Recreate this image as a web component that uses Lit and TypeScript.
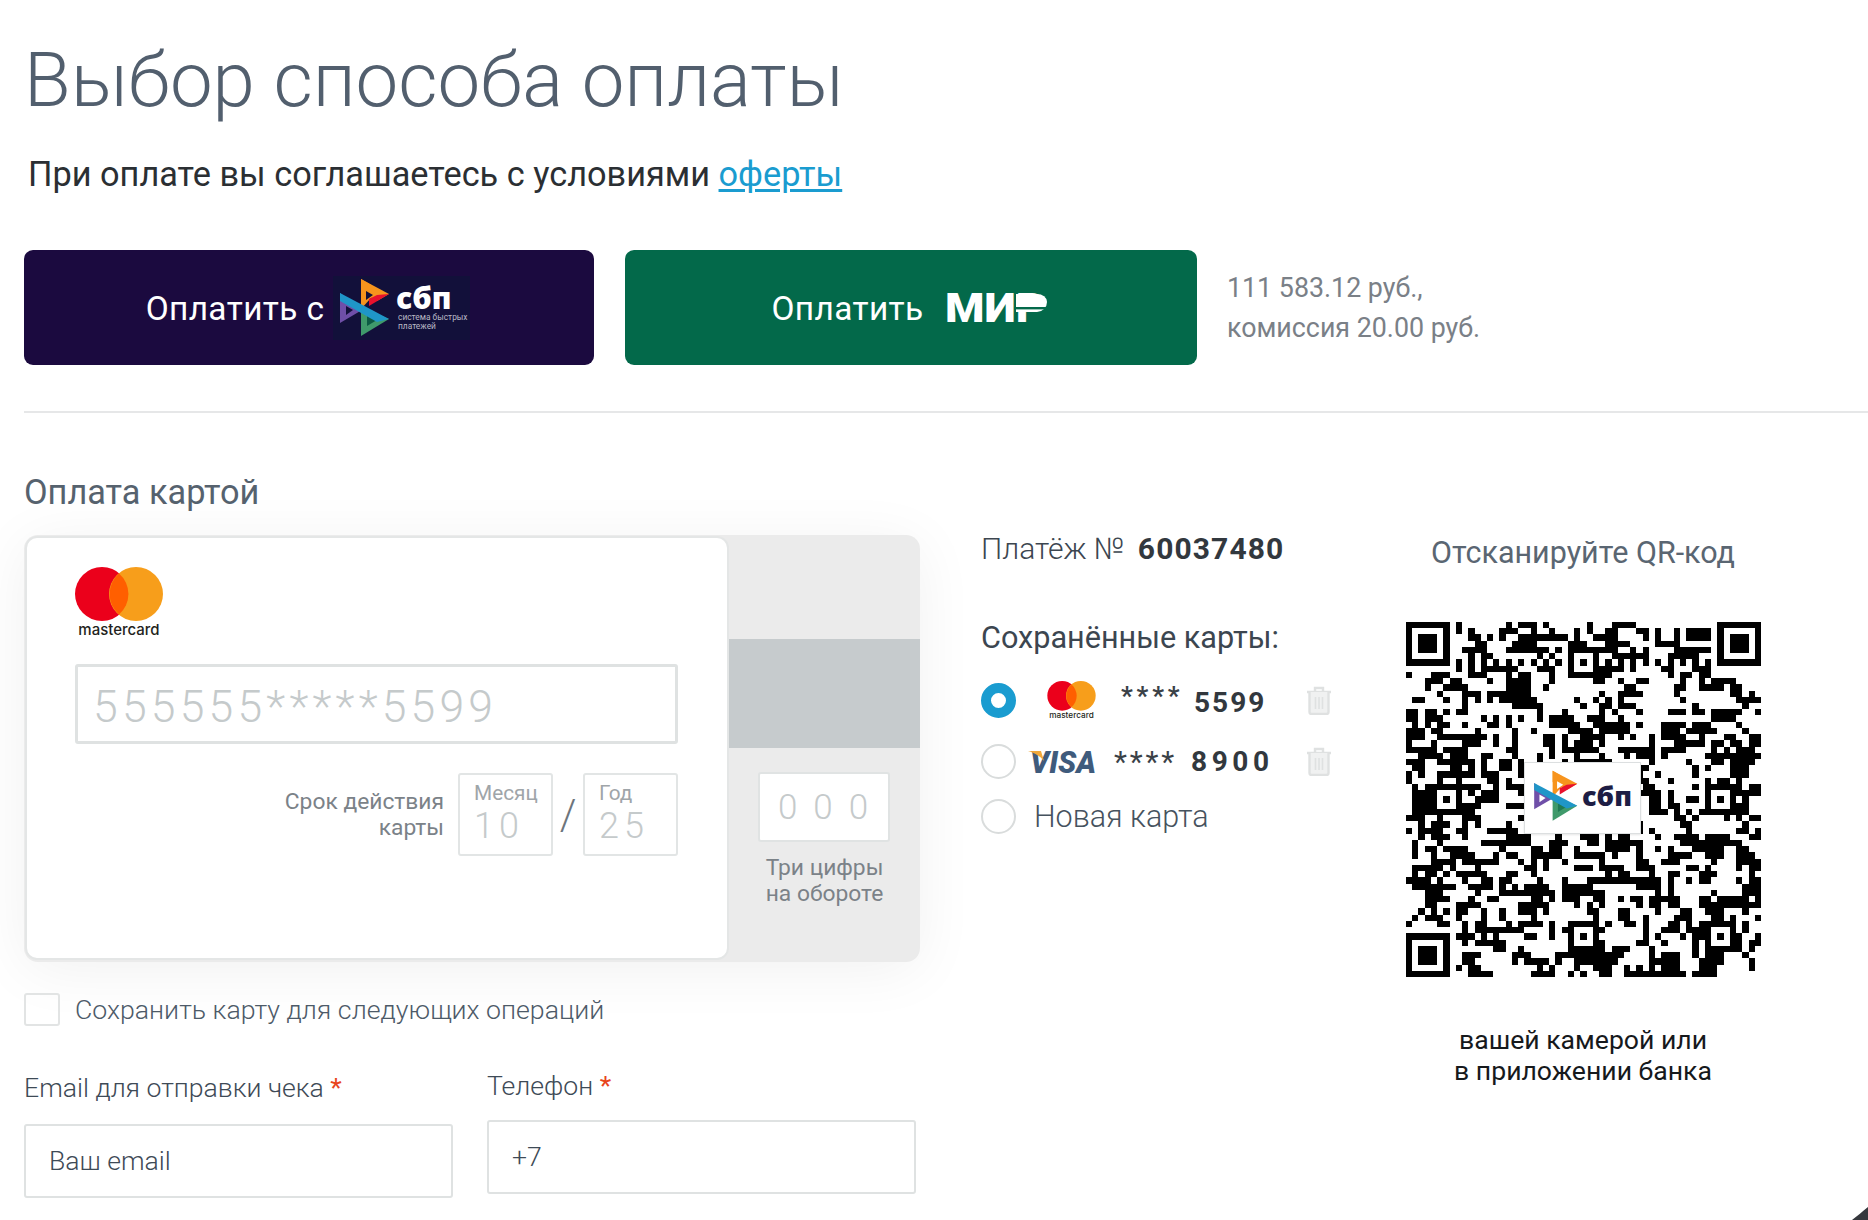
import { LitElement, html, css, svg } from "lit";
import { customElement } from "lit/decorators.js";

function qrCells(): string {
  const n = 57;
  const g: number[][] = Array.from({ length: n }, () => Array(n).fill(-1));
  const finder = (r0: number, c0: number) => {
    for (let r = -1; r <= 7; r++) for (let c = -1; c <= 7; c++) {
      const y = r0 + r, x = c0 + c;
      if (y < 0 || x < 0 || y >= n || x >= n) continue;
      const on = r >= 0 && r <= 6 && c >= 0 && c <= 6 && (r === 0 || r === 6 || c === 0 || c === 6 || (r >= 2 && r <= 4 && c >= 2 && c <= 4));
      g[y][x] = on ? 1 : 0;
    }
  };
  finder(0, 0); finder(0, 50); finder(50, 0);
  const centers = [6, 28, 50];
  for (const cy of centers) for (const cx of centers) {
    if ((cy === 6 && cx === 6) || (cy === 6 && cx === 50) || (cy === 50 && cx === 6)) continue;
    for (let r = -2; r <= 2; r++) for (let c = -2; c <= 2; c++) {
      g[cy + r][cx + c] = Math.max(Math.abs(r), Math.abs(c)) === 1 ? 0 : 1;
    }
  }
  for (let i = 8; i < n - 8; i++) {
    if (g[6][i] < 0) g[6][i] = i % 2 === 0 ? 1 : 0;
    if (g[i][6] < 0) g[i][6] = i % 2 === 0 ? 1 : 0;
  }
  let s = 0x2f6e2b1;
  const rnd = () => { s ^= s << 13; s ^= s >>> 17; s ^= s << 5; s >>>= 0; return s / 4294967296; };
  for (let r = 0; r < n; r++) for (let c = 0; c < n; c++) {
    if (g[r][c] >= 0) continue;
    const up = r > 0 ? g[r - 1][c] : 0, left = c > 0 ? g[r][c - 1] : 0;
    const p = 0.28 + 0.2 * (up === 1 ? 1 : 0) + 0.2 * (left === 1 ? 1 : 0);
    g[r][c] = rnd() < p ? 1 : 0;
  }
  let d = "";
  for (let r = 0; r < n; r++) {
    let c = 0;
    while (c < n) {
      if (g[r][c] === 1) {
        let e = c;
        while (e + 1 < n && g[r][e + 1] === 1) e++;
        d += `M${c} ${r}h${e - c + 1}v1h-${e - c + 1}z`;
        c = e + 1;
      } else c++;
    }
  }
  return d;
}
const QR_PATH = qrCells();

const sbpMark = (hole: string) => svg`
  <polygon points="28,3 56,18 44,25 28,16" fill="#f7941d"/>
  <polygon points="28,3 38,9 38,22 28,33" fill="#f7941d"/>
  <polygon points="56,18 36,30 36,23 44,19" fill="#e8112d"/>
  <polygon points="33,15 40,19 33,24" fill="${hole}"/>
  <polygon points="7,17 7,47 29,34" fill="#6f4fa8"/>
  <polygon points="13,30 13,39 20,34" fill="${hole}"/>
  <polygon points="28,60 56,43 28,31" fill="#3f9a6b"/>
  <polygon points="34,40 34,50 44,44" fill="${hole === "#fff" ? "#1f7a54" : "#0c5a44"}"/>
  <polygon points="7,17 56,43 44,46 7,25" fill="#1f96c8"/>
`;

const mcLogo = (w: number, h: number, cls: string) => html`
  <svg class=${cls} width=${w} height=${h} viewBox="0 0 88 71">
    <ellipse cx="27" cy="27" rx="27" ry="27" fill="#eb001b"/>
    <ellipse cx="61" cy="27" rx="27" ry="27" fill="#f79e1b"/>
    <path d="M44 6.5a27 27 0 0 1 0 41a27 27 0 0 1 0-41z" fill="#ff5f00"/>
    <text x="44" y="68" text-anchor="middle" font-family="Inter, Roboto, sans-serif" font-size="15" font-weight="500" fill="#231f20">mastercard</text>
  </svg>`;

const trash = html`
  <svg class="trash" width="26" height="29" viewBox="0 0 26 29" fill="none" stroke="#dfe1e1" stroke-width="2.4">
    <path d="M1 6h24M9 6V2h8v4"/>
    <path d="M3.5 6v20a2 2 0 0 0 2 2h15a2 2 0 0 0 2-2V6" fill="#f0f1f1"/>
    <path d="M9.5 11v12M13 11v12M16.5 11v12" stroke-width="1.6"/>
  </svg>`;

@customElement("app-root")
export class AppRoot extends LitElement {
  static styles = css`
    :host {
      display: block; position: relative; width: 1868px; height: 1220px; overflow: hidden;
      background: #fff; font-family: Roboto, "Liberation Sans", sans-serif; color: #4d5a68;
    }
    .page { box-sizing: border-box; width: 1868px; height: 1220px; padding: 30px 0 0 24px; }
    h1 { margin: 0; font-weight: 300; font-size: 76.2px; line-height: 100px; color: #525f6e; }
    .terms { margin: 24px 0 0 4px; font-size: 34.3px; line-height: 40px; color: #2b2f33; }
    .terms a { color: #1a9cd0; text-decoration: underline; text-underline-offset: 3px; }
    .pay { display: flex; align-items: center; margin-top: 56px; height: 115px; }
    .btn { height: 115px; border-radius: 9px; display: flex; align-items: center; justify-content: center; color: #fff; font-size: 33.4px; }
    .btn.sbp { width: 570px; background: #1b0a3f; gap: 9px; padding-right: 2px; box-sizing: border-box; }
    .btn.mir { width: 572px; margin-left: 31px; background: #03694a; gap: 21px; padding-right: 3px; box-sizing: border-box; }
    .btn span { letter-spacing: .4px; padding-top: 2px; }
    .sbp-logo, .mir-logo { display: block; flex: none; }
    .sum { margin-left: 30px; font-size: 26.8px; line-height: 40px; color: #7a8087; }
    .rule { height: 2px; background: #e6e7e8; margin-top: 46px; }
    h2 { margin: 59px 0 0; font-weight: 400; font-size: 34.3px; line-height: 40px; color: #56626e; }
    .main { display: flex; align-items: flex-start; margin-top: 23px; }
    .left { width: 896px; flex: none; }
    .card {
      display: flex; width: 896px; height: 427px; border-radius: 14px; background: #ebebeb;
      box-shadow: 0 8px 60px rgba(0,0,0,.06);
    }
    .front {
      box-sizing: border-box; width: 704px; height: 424px; margin: 1px 0 0 1px; flex: none;
      background: #fff; border: 2px solid #e4e6e6; border-radius: 12px; padding: 29px 49px 0 48px;
    }
    .mc-big { display: block; }
    .num {
      box-sizing: border-box; height: 80px; margin-top: 26px; border: 3px solid #dfe2e2; border-radius: 3px;
      display: flex; align-items: center; padding: 5px 0 0 15px; font-size: 44.5px; font-weight: 300; color: #c5cacb; letter-spacing: 4.2px;
    }
    .exp { display: flex; justify-content: flex-end; align-items: center; margin-top: 29px; }
    .exp-label { text-align: right; font-size: 22.8px; line-height: 26px; color: #7b8288; margin-right: 14px; }
    .box {
      box-sizing: border-box; width: 95px; height: 83px; border: 2px solid #e2e5e5; border-radius: 3px; padding: 6px 0 0 14px; background: #fff;
    }
    .box small { display: block; font-size: 20.8px; line-height: 24px; color: #9fa5a9; }
    .box b { display: block; margin-top: 2px; font-size: 36px; font-weight: 300; line-height: 39px; color: #c5cacb; letter-spacing: 5px; }
    .slash { width: 30px; text-align: center; font-size: 42px; font-weight: 300; color: #6d757c; }
    .back { width: 191px; flex: none; padding-top: 104px; display: flex; flex-direction: column; align-items: center; }
    .stripe { width: 191px; height: 109px; background: #c6cbcd; }
    .cvc {
      box-sizing: border-box; width: 132px; height: 70px; margin: 24px 1px 0 0; background: #fff; border: 2px solid #e0e3e3; border-radius: 3px;
      display: flex; align-items: center; justify-content: center; font-size: 35px; font-weight: 300; color: #c5cacb; letter-spacing: 16px; padding-left: 14px;
    }
    .cvc-label { margin-top: 13px; text-align: center; font-size: 22.8px; line-height: 26px; color: #7b8288; }
    .check { display: flex; align-items: center; margin-top: 31px; height: 33px; }
    .cb { box-sizing: border-box; width: 36px; height: 33px; border: 2px solid #e2e4e4; border-radius: 3px; }
    .check span { margin-left: 15px; font-size: 26.7px; font-weight: 300; color: #4d5a68; }
    .fields { display: flex; gap: 35px; }
    .field { width: 429px; }
    .field.email { margin-top: 46px; }
    .field.phone { margin-top: 44px; margin-left: -1px; }
    .field label { display: block; font-size: 26.6px; line-height: 32px; font-weight: 300; color: #3e4a56; }
    .field label i { color: #e8451c; font-style: normal; font-weight: 400; }
    .input {
      box-sizing: border-box; height: 74px; border: 2px solid #dfe2e2; border-radius: 3px; display: flex; align-items: center; padding: 0 0 2px 23px;
      font-size: 26.6px; font-weight: 300; color: #3e4a56;
    }
    .field.email .input { margin-top: 20px; }
    .field.phone .input { margin-top: 18px; }
    .mid { width: 402px; flex: none; margin-left: 61px; }
    .pno { margin: 1px 0 0; font-size: 30px; line-height: 26px; font-weight: 300; color: #3c4650; }
    .pno b { font-weight: 700; letter-spacing: 1.1px; color: #32383e; margin-left: 6px; }
    .saved { margin-top: 59px; font-size: 30.6px; line-height: 34px; color: #3c4650; }
    .row { display: flex; align-items: center; height: 34px; }
    .r1 { margin-top: 28px; }
    .r2 { margin-top: 27px; }
    .r3 { margin-top: 21px; }
    .radio { box-sizing: border-box; width: 35px; height: 35px; flex: none; border-radius: 50%; border: 2px solid #d9dcdc; }
    .radio.on { border: 10px solid #1a9cd0; background: #fff; }
    .mc-small { display: block; margin-left: 31px; flex: none; }
    .stars { font-weight: 700; color: #3a4147; }
    .r1 .stars { margin-left: 25px; font-size: 26px; letter-spacing: 3.8px; width: 73px; margin-top: -8px; flex: none; }
    .r2 .stars { margin-left: 16px; font-size: 30px; letter-spacing: 2.8px; width: 77px; flex: none; font-weight: 400; }
    .digits { font-weight: 700; color: #32383e; font-size: 28px; flex: none; }
    .r1 .digits { letter-spacing: 2px; width: 112px; margin-top: 4px; }
    .r2 .digits { letter-spacing: 4.6px; width: 115px; }
    .trash { display: block; flex: none; }
    .visa { display: block; margin-left: 14px; flex: none; margin-top: 2px; overflow: visible; }
    .new { margin-left: 18px; font-size: 30.5px; font-weight: 300; color: #46525e; }
    .right { width: 400px; flex: none; display: flex; flex-direction: column; align-items: center; }
    .qr-title { font-size: 30.5px; line-height: 36px; color: #5a6672; }
    .qr { position: relative; width: 355px; height: 355px; margin-top: 51px; }
    .qr > svg.code { display: block; }
    .qr-badge {
      position: absolute; left: 118px; top: 140px; width: 117px; height: 72px; box-sizing: border-box;
      background: #fff; border: 1px solid #dcdfe0; box-shadow: 0 1px 2px rgba(0,0,0,.1);
    }
    .qr-badge svg { display: block; }
    .qr-cap { margin-top: 47px; text-align: center; font-size: 26.6px; line-height: 31px; color: #16191c; }
    .corner { position: absolute; right: 0; bottom: 0; display: block; }
  `;

  render() {
    return html`
      <div class="page">
        <h1>Выбор способа оплаты</h1>
        <div class="terms">При оплате вы соглашаетесь с условиями <a>оферты</a></div>

        <div class="pay">
          <div class="btn sbp">
            <span>Оплатить с</span>
            <svg class="sbp-logo" width="137" height="64" viewBox="0 0 137 64">
              <rect width="137" height="64" fill="#12103a"/>
              ${sbpMark("#12103a")}
              <text x="63" y="33" font-family="'Open Sans', Roboto, sans-serif" font-weight="800" font-size="30" fill="#fff">сбп</text>
              <text x="65" y="44" font-family="Roboto, sans-serif" font-size="8.4" fill="#b9b9c6">система быстрых</text>
              <text x="65" y="53" font-family="Roboto, sans-serif" font-size="8.4" fill="#b9b9c6">платежей</text>
            </svg>
          </div>
          <div class="btn mir">
            <span>Оплатить</span>
            <svg class="mir-logo" width="103" height="48" viewBox="0 0 103 48">
              <text x="0" y="38" font-family="Roboto, sans-serif" font-weight="900" font-size="40" textLength="100" lengthAdjust="spacingAndGlyphs" fill="#fff">МИР</text>
              <path d="M71 10h21a10 8 0 0 1 10 8a10 10 0 0 1-10 10H71z" fill="#fff"/>
              <rect x="69" y="23" width="34" height="2.4" fill="#03694a"/>
            </svg>
          </div>
          <div class="sum">111 583.12 руб.,<br />комиссия 20.00 руб.</div>
        </div>

        <div class="rule"></div>
        <h2>Оплата картой</h2>

        <div class="main">
          <div class="left">
            <div class="card">
              <div class="front">
                ${mcLogo(88, 71, "mc-big")}
                <div class="num">555555*****5599</div>
                <div class="exp">
                  <div class="exp-label">Срок действия<br />карты</div>
                  <div class="box"><small>Месяц</small><b>10</b></div>
                  <div class="slash">/</div>
                  <div class="box"><small>Год</small><b>25</b></div>
                </div>
              </div>
              <div class="back">
                <div class="stripe"></div>
                <div class="cvc">000</div>
                <div class="cvc-label">Три цифры<br />на обороте</div>
              </div>
            </div>
            <div class="check"><div class="cb"></div><span>Сохранить карту для следующих операций</span></div>
            <div class="fields">
              <div class="field email">
                <label>Email для отправки чека <i>*</i></label>
                <div class="input">Ваш email</div>
              </div>
              <div class="field phone">
                <label>Телефон <i>*</i></label>
                <div class="input">+7</div>
              </div>
            </div>
          </div>

          <div class="mid">
            <div class="pno">Платёж № <b>60037480</b></div>
            <div class="saved">Сохранённые карты:</div>
            <div class="row r1">
              <div class="radio on"></div>
              ${mcLogo(49, 39, "mc-small")}
              <div class="stars">****</div>
              <div class="digits">5599</div>
              ${trash}
            </div>
            <div class="row r2">
              <div class="radio"></div>
              <svg class="visa" width="68" height="38" viewBox="0 0 68 38">
                <text x="0" y="30" font-family="Roboto, sans-serif" font-weight="900" font-style="italic" font-size="31" textLength="66" lengthAdjust="spacingAndGlyphs" fill="#3f5b7c">VISA</text>
                <path d="M-2 8h13l3 10C10 13 5 10 -2 8z" fill="#f2a93b"/>
              </svg>
              <div class="stars">****</div>
              <div class="digits">8900</div>
              ${trash}
            </div>
            <div class="row r3">
              <div class="radio"></div>
              <div class="new">Новая карта</div>
            </div>
          </div>

          <div class="right">
            <div class="qr-title">Отсканируйте QR-код</div>
            <div class="qr">
              <svg class="code" width="355" height="355" viewBox="0 0 57 57" shape-rendering="crispEdges">
                <path d=${QR_PATH} fill="#000"/>
              </svg>
              <div class="qr-badge">
                <svg width="115" height="70" viewBox="0 0 115 70">
                  <g transform="translate(3 5) scale(.88)">${sbpMark("#fff")}</g>
                  <text x="57" y="43" font-family="'Open Sans', Roboto, sans-serif" font-weight="800" font-size="27" fill="#1d1d44">сбп</text>
                </svg>
              </div>
            </div>
            <div class="qr-cap">вашей камерой или<br />в приложении банка</div>
          </div>
        </div>
      </div>
      <svg class="corner" width="16" height="13" viewBox="0 0 16 13"><path d="M0 13C5 9 10 5 16 0v13z" fill="#35373d"/></svg>
    `;
  }
}
